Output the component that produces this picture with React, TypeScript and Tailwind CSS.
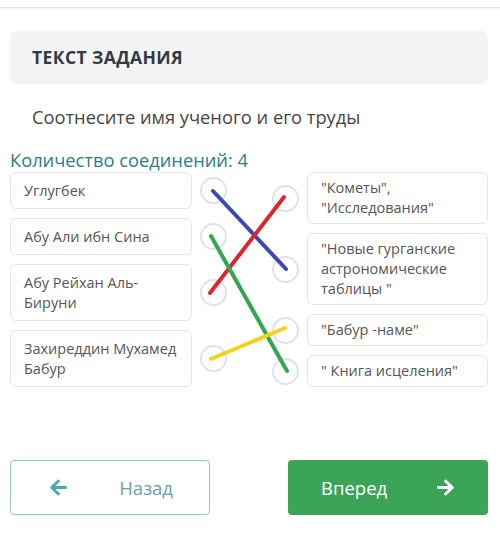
import { FaArrowLeft, FaArrowRight } from "react-icons/fa";

const leftItems = ["Углугбек", "Абу Али ибн Сина", "Абу Рейхан Аль-Бируни", "Захиреддин Мухамед Бабур"];
const rightItems = ['"Кометы", "Исследования"', '"Новые гурганские астрономические таблицы "', '"Бабур -наме"', '" Книга исцеления"'];

// connections drawn over the matching area (coords relative to its top-left)
const links = [
  { x1: 213, y1: 19, x2: 286, y2: 97, color: "#3b48b5" },
  { x1: 210, y1: 121, x2: 284, y2: 25, color: "#d9272e" },
  { x1: 211, y1: 64, x2: 287, y2: 199, color: "#2fa84f" },
  { x1: 211, y1: 187, x2: 285, y2: 156, color: "#f2d31b" },
];

const Dot = () => (
  <div className="w-[27px] h-[27px] shrink-0 rounded-full border-2 border-[#dfe2e6] bg-white" />
);

export default function App() {
  return (
    <div
      className="w-[500px] h-[557px] bg-white overflow-hidden"
      style={{ fontFamily: '"Open Sans", "Noto Sans", sans-serif' }}
    >
      <div className="h-[8px] border-b border-[#e4e4e4] shadow-[0_1px_2px_rgba(0,0,0,0.04)]" />

      <div className="mt-[23px] ml-[10px] w-[478px] h-[53px] bg-[#f3f4f6] rounded-[6px] flex items-center pl-[22px]">
        <span className="text-[17.5px] font-bold text-[#343a44] tracking-[0.4px]">ТЕКСТ ЗАДАНИЯ</span>
      </div>

      <p className="mt-[21px] pl-[32px] text-[18.3px] leading-[24px] text-[#454545]">
        Соотнесите имя ученого и его труды
      </p>

      <p className="mt-[19px] pl-[10px] text-[18.3px] leading-[23px] text-[#2b7d88]">
        Количество соединений: 4
      </p>

      <div className="relative mt-[1px] flex justify-between pl-[10px] pr-[12px]">
        <div className="flex flex-col gap-[9px]">
          {leftItems.map((t) => (
            <div key={t} className="flex items-center">
              <div className="w-[182px] border border-[#e3e5e8] rounded-[6px] bg-white pl-[13px] pr-[2px] py-[7.5px] text-[14.5px] leading-[20px] text-[#555]">
                {t}
              </div>
              <div className="ml-[8px]">
                <Dot />
              </div>
            </div>
          ))}
        </div>

        <div className="flex flex-col gap-[9px]">
          {rightItems.map((t) => (
            <div key={t} className="flex items-center">
              <Dot />
              <div className="ml-[8px] w-[181px] border border-[#e3e5e8] rounded-[6px] bg-white pl-[13px] pr-[6px] py-[5px] text-[14.5px] leading-[20px] text-[#555]">
                {t}
              </div>
            </div>
          ))}
        </div>

        <svg className="absolute left-0 top-0 pointer-events-none" width="500" height="220">
          {links.map((l, i) => (
            <line key={i} x1={l.x1} y1={l.y1} x2={l.x2} y2={l.y2} stroke={l.color} strokeWidth="4" strokeLinecap="round" />
          ))}
        </svg>
      </div>

      <div className="mt-[73px] flex justify-between pl-[10px] pr-[12px]">
        <button className="w-[200px] h-[55px] rounded-[4px] border border-[#98c4c9] bg-white flex items-center justify-between pl-[38px] pr-[36px]">
          <FaArrowLeft className="text-[#4aa8b0]" size={19} />
          <span className="text-[18.5px] text-[#6a9fab]">Назад</span>
        </button>
        <button className="w-[200px] h-[55px] rounded-[4px] bg-[#3ba457] flex items-center justify-between pl-[33px] pr-[33px]">
          <span className="text-[18.5px] text-white">Вперед</span>
          <FaArrowRight className="text-white" size={19} />
        </button>
      </div>
    </div>
  );
}
